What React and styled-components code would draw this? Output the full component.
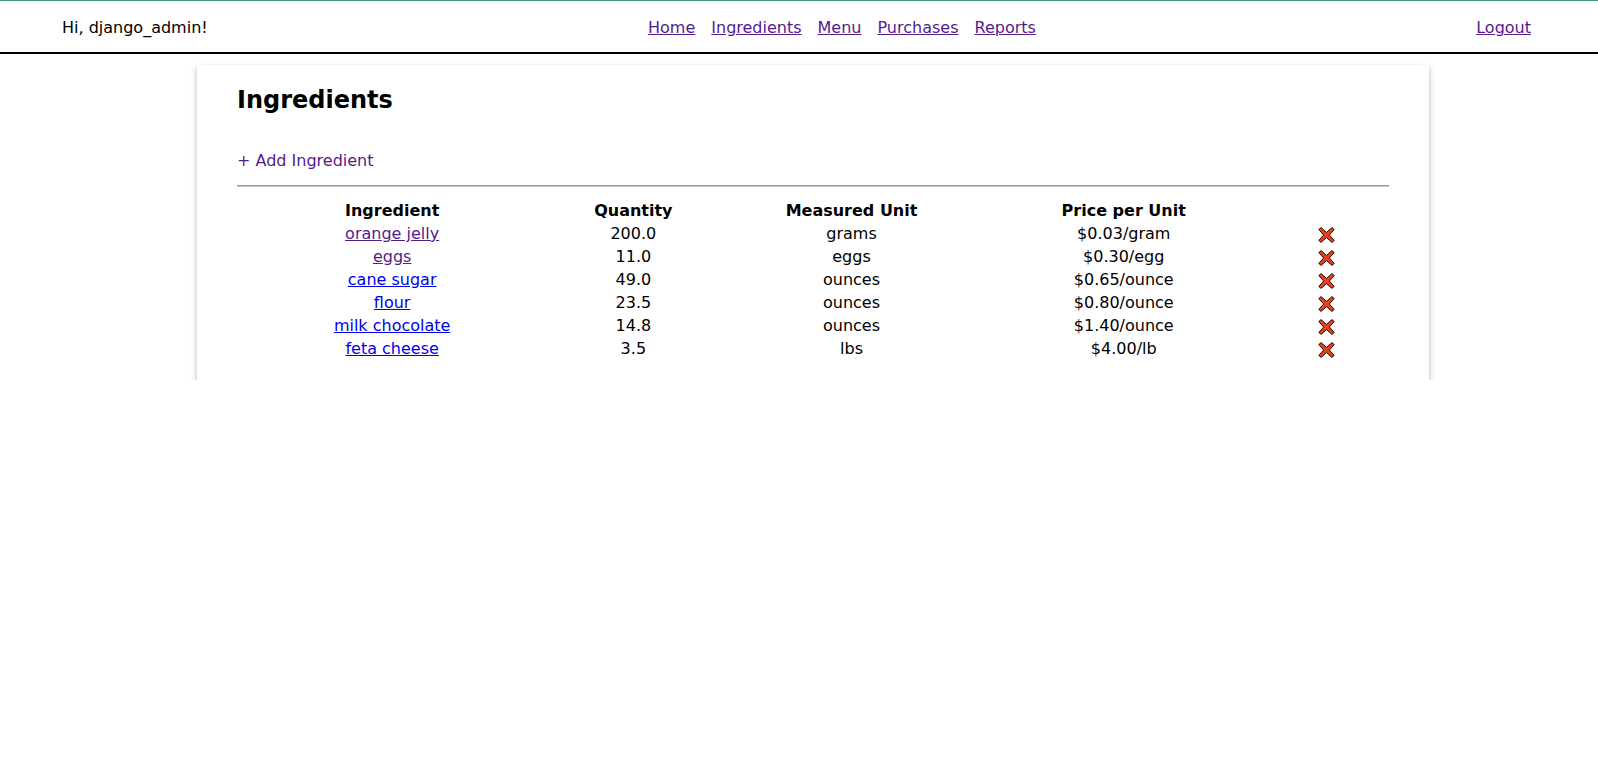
import React from "react";
import styled, { createGlobalStyle } from "styled-components";

const GlobalStyle = createGlobalStyle`
  html, body {
    margin: 0;
    padding: 0;
    background: #ffffff;
    color: #000000;
    font-family: "DejaVu Sans", Verdana, sans-serif;
    font-size: 16px;
  }
`;

const NavBar = styled.nav`
  display: flex;
  align-items: center;
  justify-content: space-between;
  border-top: 1px solid #3a9b7e;
  border-bottom: 2px solid #000000;
  padding: 17px 67px 15px 62px;
  line-height: 19px;
`;

const Greeting = styled.span`
  color: #000000;
`;

const NavLinks = styled.div`
  display: flex;
  gap: 16px;
`;

const NavLink = styled.a`
  color: #551a8b;
  text-decoration: underline;
`;

const Card = styled.main`
  width: 1232px;
  box-sizing: border-box;
  margin: 11px 0 0 197px;
  padding: 21px 40px 20px;
  background: #ffffff;
  box-shadow: 0 3px 6px rgba(0, 0, 0, 0.3);
`;

const Title = styled.h2`
  margin: 0;
  font-size: 24px;
  line-height: 29px;
  font-weight: bold;
`;

const AddLink = styled.a`
  display: block;
  margin-top: 36px;
  line-height: 19px;
  color: #551a8b;
  text-decoration: none;
`;

const Rule = styled.hr`
  margin: 15px 0 0;
  height: 0;
  border: none;
  border-top: 1px solid #9a9a9a;
  border-bottom: 1px solid #c8c8c8;
`;

const Table = styled.table`
  width: 100%;
  margin-top: 12px;
  border-collapse: collapse;
  table-layout: fixed;
  line-height: 19px;
`;

const HeadCell = styled.th`
  padding: 2px 0;
  font-weight: bold;
  text-align: center;
`;

const Cell = styled.td`
  padding: 2px 0;
  text-align: center;
  vertical-align: middle;
`;

const ItemLink = styled.a`
  color: ${(p) => (p.$visited ? "#551a8b" : "#0000ee")};
  text-decoration: underline;
`;

const DeleteButton = styled.a`
  display: inline-flex;
  vertical-align: middle;
  cursor: pointer;
`;

const CrossIcon = () => (
  <svg width="17" height="16" viewBox="0 0 17 16" aria-hidden="true">
    <polygon
      points="0.8,2.6 3,0.6 8.5,5.4 14,0.6 16.2,2.6 11.3,8 16.2,13.4 14,15.4 8.5,10.6 3,15.4 0.8,13.4 5.7,8"
      fill="#e8401c"
      stroke="#2a0800"
      strokeWidth="1"
      strokeLinejoin="round"
    />
  </svg>
);

const columns = [
  { label: "Ingredient", width: 310 },
  { label: "Quantity", width: 172 },
  { label: "Measured Unit", width: 264 },
  { label: "Price per Unit", width: 280 },
  { label: "", width: 125 },
];

const rows = [
  { name: "orange jelly", qty: "200.0", unit: "grams", price: "$0.03/gram", visited: true },
  { name: "eggs", qty: "11.0", unit: "eggs", price: "$0.30/egg", visited: true },
  { name: "cane sugar", qty: "49.0", unit: "ounces", price: "$0.65/ounce" },
  { name: "flour", qty: "23.5", unit: "ounces", price: "$0.80/ounce" },
  { name: "milk chocolate", qty: "14.8", unit: "ounces", price: "$1.40/ounce" },
  { name: "feta cheese", qty: "3.5", unit: "lbs", price: "$4.00/lb" },
];

export default function App() {
  return (
    <>
      <GlobalStyle />
      <NavBar>
        <Greeting>Hi, django_admin!</Greeting>
        <NavLinks>
          <NavLink href="#">Home</NavLink>
          <NavLink href="#">Ingredients</NavLink>
          <NavLink href="#">Menu</NavLink>
          <NavLink href="#">Purchases</NavLink>
          <NavLink href="#">Reports</NavLink>
        </NavLinks>
        <NavLink href="#">Logout</NavLink>
      </NavBar>
      <Card>
        <Title>Ingredients</Title>
        <AddLink href="#">+ Add Ingredient</AddLink>
        <Rule />
        <Table>
          <colgroup>
            {columns.map((c, i) => (
              <col key={i} style={{ width: c.width }} />
            ))}
          </colgroup>
          <thead>
            <tr>
              {columns.map((c, i) => (
                <HeadCell key={i}>{c.label}</HeadCell>
              ))}
            </tr>
          </thead>
          <tbody>
            {rows.map((r) => (
              <tr key={r.name}>
                <Cell>
                  <ItemLink href="#" $visited={r.visited}>
                    {r.name}
                  </ItemLink>
                </Cell>
                <Cell>{r.qty}</Cell>
                <Cell>{r.unit}</Cell>
                <Cell>{r.price}</Cell>
                <Cell>
                  <DeleteButton title="Delete">
                    <CrossIcon />
                  </DeleteButton>
                </Cell>
              </tr>
            ))}
          </tbody>
        </Table>
      </Card>
    </>
  );
}
